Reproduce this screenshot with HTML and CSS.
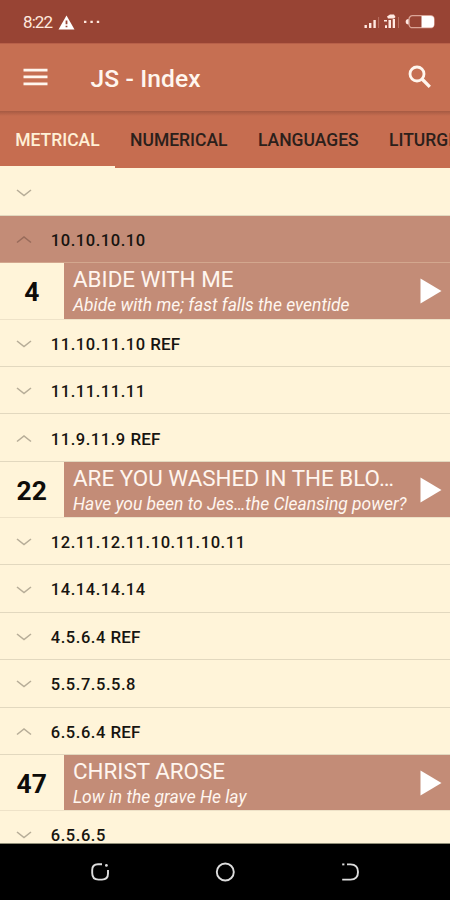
FILE: index.html
```
<!DOCTYPE html>
<html lang="en">
<head>
<meta charset="utf-8">
<title>JS - Index</title>
<link rel="stylesheet" href="styles.css">
</head>
<body>
<svg class="defs" width="0" height="0">
  <symbol id="down" viewBox="0 0 16 10"><path d="M1 2 8 7.6 15 2" fill="none" stroke="currentColor" stroke-width="1.6"/></symbol>
  <symbol id="up" viewBox="0 0 16 10"><path d="M1 7.5 8 1.9 15 7.5" fill="none" stroke="currentColor" stroke-width="1.6"/></symbol>
  <symbol id="play" viewBox="0 0 22 26"><path d="M0.5 0.5V25.5L21.5 13Z" fill="#fff"/></symbol>
</svg>
<div class="status">
  <span class="time">8:22</span>
  <svg class="warn" width="17" height="15" viewBox="0 0 17 15"><path d="M8.5.5 16.5 14.5H.5Z" fill="#fff"/><path d="M8.5 5.5V9.3M8.5 10.7V12.3" stroke="#984434" stroke-width="1.8"/></svg>
  <svg class="dots" width="18" height="4" viewBox="0 0 18 4"><path d="M1 .7H3.4V3.1H1ZM7.4 .7H9.8V3.1H7.4ZM13.8 .7H16.2V3.1H13.8Z" fill="#ffe9df"/></svg>
  <svg class="system" width="72" height="17" viewBox="0 0 72 17">
    <g fill="#ffe9e2"><path d="M.5 11H2.9V14H.5ZM5 9H7.4V14H5ZM9.4 6H11.8V14H9.4Z"/><path d="M14.6 3V14" stroke="#b97060" stroke-width="1"/><path d="M21 11.3H23V14H21ZM24.5 6H27V14H24.5ZM28.7 5H31V14H28.7ZM20 6H23V7.5H20ZM23 2.5 26 .5H30L31.5 3 30 4.5H24Z"/><path d="M34.5 3V14" stroke="#b97060" stroke-width="1"/></g>
    <rect x="45" y="1.7" width="25" height="12" rx="3.5" fill="none" stroke="#dba597" stroke-width="1.3"/><path d="M57.5 2H67Q70 2 70 5V10.5Q70 13.4 67 13.4H57.5Z" fill="#fff"/><path d="M44.5 5Q41.7 5 41.7 7.7T44.5 10.4Z" fill="#ffe9e2"/>
  </svg>
</div>
<header class="toolbar">
  <svg class="menu" width="25" height="18" viewBox="0 0 25 18"><path d="M.5 2.1H24.5M.5 8.9H24.5M.5 15.8H24.5" stroke="#fff6ee" stroke-width="2.7"/></svg>
  <h1>JS - Index</h1>
  <svg class="search" width="24" height="24" viewBox="0 0 24 24"><circle cx="9" cy="9" r="7" fill="none" stroke="#fff6ee" stroke-width="2.8"/><path d="M14 14 21.8 21.8" stroke="#fff6ee" stroke-width="3.3"/></svg>
</header>
<nav class="tabs">
  <div class="tab active"><span>METRICAL</span></div>
  <div class="tab"><span>NUMERICAL</span></div>
  <div class="tab"><span>LANGUAGES</span></div>
  <div class="tab"><span>LITURGICAL</span></div>
</nav>
<main>
  <div class="row"><svg class="chev"><use href="#down"/></svg></div>
  <div class="row selected"><svg class="chev"><use href="#up"/></svg><span>10.10.10.10</span></div>
  <div class="item"><b>4</b><div class="song"><div class="name">ABIDE WITH ME</div><div class="line">Abide with me; fast falls the eventide</div><svg class="play"><use href="#play"/></svg></div></div>
  <div class="row"><svg class="chev"><use href="#down"/></svg><span>11.10.11.10 <i>REF</i></span></div>
  <div class="row"><svg class="chev"><use href="#down"/></svg><span>11.11.11.11</span></div>
  <div class="row"><svg class="chev"><use href="#up"/></svg><span>11.9.11.9 <i>REF</i></span></div>
  <div class="item"><b>22</b><div class="song"><div class="name">ARE YOU WASHED IN THE BLO…</div><div class="line">Have you been to Jes…the Cleansing power?</div><svg class="play"><use href="#play"/></svg></div></div>
  <div class="row"><svg class="chev"><use href="#down"/></svg><span>12.11.12.11.10.11.10.11</span></div>
  <div class="row"><svg class="chev"><use href="#down"/></svg><span>14.14.14.14</span></div>
  <div class="row"><svg class="chev"><use href="#down"/></svg><span>4.5.6.4 <i>REF</i></span></div>
  <div class="row"><svg class="chev"><use href="#down"/></svg><span>5.5.7.5.5.8</span></div>
  <div class="row"><svg class="chev"><use href="#up"/></svg><span>6.5.6.4 <i>REF</i></span></div>
  <div class="item"><b>47</b><div class="song"><div class="name">CHRIST AROSE</div><div class="line">Low in the grave He lay</div><svg class="play"><use href="#play"/></svg></div></div>
  <div class="row"><svg class="chev"><use href="#down"/></svg><span>6.5.6.5</span></div>
</main>
<footer class="navbar">
  <svg width="20" height="20" viewBox="0 0 20 20"><path d="M12 2.2H8Q2.2 2.2 2.2 8V11Q2.2 17.6 8.5 17.6H12Q18 17.6 18 11.5V8" fill="none" stroke="#ddd" stroke-width="1.9"/><circle cx="16.4" cy="3.4" r="1.4" fill="#ddd"/></svg>
  <svg width="20" height="20" viewBox="0 0 20 20"><circle cx="10.3" cy="10" r="8.5" fill="none" stroke="#ddd" stroke-width="1.9"/></svg>
  <svg width="20" height="20" viewBox="0 0 20 20"><path d="M7 2.4H10.5Q18 2.4 18 10T10.5 17.6H2.2" fill="none" stroke="#ddd" stroke-width="1.9"/><path d="M2.2 2.4H4.4" stroke="#ddd" stroke-width="1.9"/></svg>
</footer>
</body>
</html>
```
FILE: styles.css
```
* { box-sizing: border-box; }
body {
  margin: 0;
  width: 450px;
  height: 900px;
  overflow: hidden;
  display: flex;
  flex-direction: column;
  font-family: Roboto, sans-serif;
  background: #fff4d9;
}
svg { flex: none; display: block; }
.defs { position: absolute; }
.status {
  height: 43px;
  flex: none;
  display: flex;
  align-items: center;
  padding: 1px 14px 0 23px;
  background: #984434;
  color: #ffe9df;
}
.time { font-size: 17px; width: 35px; letter-spacing: -0.9px; }
.dots { margin-left: 8px; }
.system { margin-left: auto; }
.toolbar {
  height: 68px;
  flex: none;
  display: flex;
  align-items: center;
  padding: 0 18px 0 23px;
  background: #c66f52;
  border-top: 1px solid #b86049;
}
.menu { margin-top: -1px; }
.toolbar h1 {
  margin: 2px 0 0 42.5px;
  font-size: 24.6px;
  font-weight: 500;
  letter-spacing: 0.1px;
  color: #fff6ee;
}
.search { margin: -2px 0 0 auto; }
.tabs {
  height: 57px;
  flex: none;
  display: flex;
  overflow: hidden;
  background: linear-gradient(#a65a43, #c66d50 5px);
}
.tab {
  flex: none;
  padding: 19px 15.2px 0;
  font-size: 17.5px;
  line-height: 21px;
  font-weight: 500;
  color: #2b201b;
}
.active { color: #fff0d6; border-bottom: 2.5px solid #fff4d9; }
main { flex: none; height: 676px; padding-top: 0.6px; overflow: hidden; border-bottom: 1px solid #8f8e78; }
.row {
  height: 47.45px;
  display: flex;
  align-items: center;
  gap: 19.3px;
  padding: 2px 0 0 15.5px;
  border-bottom: 1px solid #e2d8bf;
  color: #171410;
  font-size: 16.5px;
  font-weight: 500;
  letter-spacing: 0.55px;
}
.row i { font-style: normal; font-size: 17px; letter-spacing: 0.1px; }
.chev { width: 16px; height: 10px; color: #b7ad98; }
.selected { background: #c38c77; border-bottom-color: #d3a78e; }
.selected .chev { color: #986b5b; }
.item { height: 56.05px; display: flex; border-bottom: 1px solid #eee2c8; }
.item b {
  width: 63.5px;
  padding-top: 2px;
  text-align: center;
  font-size: 26.4px;
  line-height: 55px;
  font-weight: 700;
  color: #0e0c09;
}
.song {
  flex: 1;
  position: relative;
  padding: 3px 0 0 9.5px;
  background: #c38c77;
  color: #fff6ef;
  white-space: nowrap;
}
.name { font-size: 22.4px; line-height: 26px; }
.line { padding-top: 1px; font-size: 17.45px; line-height: 24px; font-style: italic; }
.play { position: absolute; right: 8px; top: 14.7px; width: 22px; height: 26px; }
.navbar {
  flex: 1;
  display: flex;
  justify-content: center;
  align-items: center;
  gap: 105px;
  background: #000;
}
```
